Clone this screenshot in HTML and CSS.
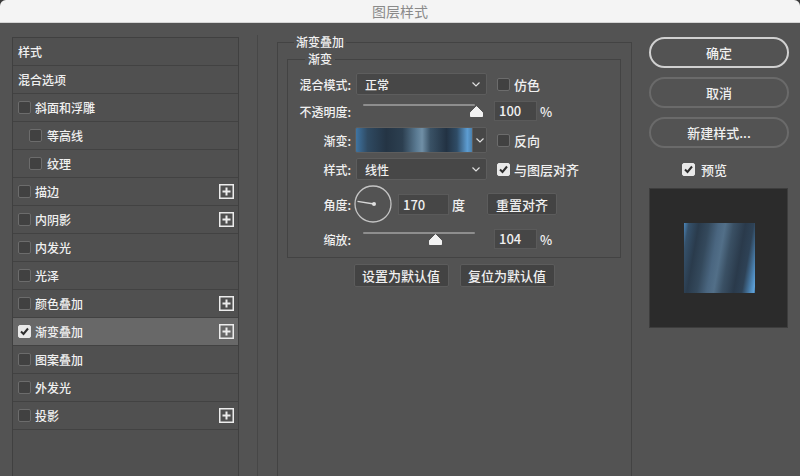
FILE: index.html
```html
<!DOCTYPE html>
<html lang="zh-CN">
<head>
<meta charset="utf-8">
<title>图层样式</title>
<link rel="stylesheet" href="styles.css">
</head>
<body>
<div class="window">
  <header class="titlebar">图层样式</header>
  <div class="main">
    <aside class="style-list">
      <div class="item"><span class="label">样式</span></div>
      <div class="item"><span class="label">混合选项</span></div>
      <div class="item"><span class="cb"></span><span class="label">斜面和浮雕</span></div>
      <div class="item indent"><span class="cb"></span><span class="label">等高线</span></div>
      <div class="item indent"><span class="cb"></span><span class="label">纹理</span></div>
      <div class="item"><span class="cb"></span><span class="label">描边</span>
        <svg class="plus" width="15" height="15" viewBox="0 0 15 15"><rect x="0.75" y="0.75" width="13.5" height="13.5" fill="none" stroke="#ececec" stroke-width="1.5"/><path d="M7.5 3.5V11.5M3.5 7.5H11.5" stroke="#ececec" stroke-width="2"/></svg></div>
      <div class="item"><span class="cb"></span><span class="label">内阴影</span>
        <svg class="plus" width="15" height="15" viewBox="0 0 15 15"><rect x="0.75" y="0.75" width="13.5" height="13.5" fill="none" stroke="#ececec" stroke-width="1.5"/><path d="M7.5 3.5V11.5M3.5 7.5H11.5" stroke="#ececec" stroke-width="2"/></svg></div>
      <div class="item"><span class="cb"></span><span class="label">内发光</span></div>
      <div class="item"><span class="cb"></span><span class="label">光泽</span></div>
      <div class="item"><span class="cb"></span><span class="label">颜色叠加</span>
        <svg class="plus" width="15" height="15" viewBox="0 0 15 15"><rect x="0.75" y="0.75" width="13.5" height="13.5" fill="none" stroke="#ececec" stroke-width="1.5"/><path d="M7.5 3.5V11.5M3.5 7.5H11.5" stroke="#ececec" stroke-width="2"/></svg></div>
      <div class="item selected"><span class="cb on"><svg width="11" height="11" viewBox="0 0 11 11"><path d="M2 5.5L4.5 8L9 2.5" fill="none" stroke="#2e2e2e" stroke-width="2"/></svg></span><span class="label">渐变叠加</span>
        <svg class="plus" width="15" height="15" viewBox="0 0 15 15"><rect x="0.75" y="0.75" width="13.5" height="13.5" fill="none" stroke="#ececec" stroke-width="1.5"/><path d="M7.5 3.5V11.5M3.5 7.5H11.5" stroke="#ececec" stroke-width="2"/></svg></div>
      <div class="item"><span class="cb"></span><span class="label">图案叠加</span></div>
      <div class="item"><span class="cb"></span><span class="label">外发光</span></div>
      <div class="item"><span class="cb"></span><span class="label">投影</span>
        <svg class="plus" width="15" height="15" viewBox="0 0 15 15"><rect x="0.75" y="0.75" width="13.5" height="13.5" fill="none" stroke="#ececec" stroke-width="1.5"/><path d="M7.5 3.5V11.5M3.5 7.5H11.5" stroke="#ececec" stroke-width="2"/></svg></div>
    </aside>

    <section class="content">
      <fieldset class="group">
        <legend>渐变叠加</legend>
        <fieldset class="sub">
          <legend>渐变</legend>
          <div class="rows">
            <div class="row r22">
              <span class="lbl">混合模式:</span>
              <div class="select"><span>正常</span><svg width="8" height="5" viewBox="0 0 8 5"><path d="M0.5 0.5L4 4L7.5 0.5" fill="none" stroke="#e0e0e0" stroke-width="1.2"/></svg></div>
              <div class="check-wrap"><span class="cb"></span><span>仿色</span></div>
            </div>
            <div class="row r22">
              <span class="lbl">不透明度:</span>
              <div class="slider"><span class="track"></span>
                <svg class="thumb" style="left:114px" width="13" height="11" viewBox="0 0 13 11"><path d="M6.5 0.5L12.5 6.5V10.5H0.5V6.5Z" fill="#f2f2f2" stroke="#f2f2f2" stroke-linejoin="round"/></svg></div>
              <span class="num">100</span><span class="unit">%</span>
            </div>
            <div class="row r26">
              <span class="lbl">渐变:</span>
              <div class="grad-pick"><span class="swatch"></span><span class="drop"><svg width="8" height="5" viewBox="0 0 8 5"><path d="M0.5 0.5L4 4L7.5 0.5" fill="none" stroke="#e0e0e0" stroke-width="1.2"/></svg></span></div>
              <div class="check-wrap"><span class="cb"></span><span>反向</span></div>
            </div>
            <div class="row r22">
              <span class="lbl">样式:</span>
              <div class="select"><span>线性</span><svg width="8" height="5" viewBox="0 0 8 5"><path d="M0.5 0.5L4 4L7.5 0.5" fill="none" stroke="#e0e0e0" stroke-width="1.2"/></svg></div>
              <div class="check-wrap"><span class="cb on"><svg width="11" height="11" viewBox="0 0 11 11"><path d="M2 5.5L4.5 8L9 2.5" fill="none" stroke="#2e2e2e" stroke-width="2"/></svg></span><span>与图层对齐</span></div>
            </div>
            <div class="row r38">
              <span class="lbl">角度:</span>
              <svg class="dial" width="38" height="38" viewBox="0 0 38 38"><circle cx="19" cy="19" r="18" fill="none" stroke="#c4c4c4" stroke-width="1.3"/><path d="M20 19L3.5 16.4" stroke="#d8d8d8" stroke-width="1.4"/><circle cx="20" cy="19" r="2" fill="#e0e0e0"/></svg>
              <span class="num wide">170</span><span class="unit deg">度</span>
              <div class="btn reset">重置对齐</div>
            </div>
            <div class="row r22">
              <span class="lbl">缩放:</span>
              <div class="slider"><span class="track"></span>
                <svg class="thumb" style="left:73px" width="13" height="11" viewBox="0 0 13 11"><path d="M6.5 0.5L12.5 6.5V10.5H0.5V6.5Z" fill="#f2f2f2" stroke="#f2f2f2" stroke-linejoin="round"/></svg></div>
              <span class="num">104</span><span class="unit">%</span>
            </div>
          </div>
        </fieldset>
        <div class="defaults">
          <div class="btn">设置为默认值</div>
          <div class="btn">复位为默认值</div>
        </div>
      </fieldset>
    </section>

    <aside class="actions">
      <div class="pill primary">确定</div>
      <div class="pill">取消</div>
      <div class="pill">新建样式...</div>
      <div class="preview-toggle"><span class="cb on"><svg width="11" height="11" viewBox="0 0 11 11"><path d="M2 5.5L4.5 8L9 2.5" fill="none" stroke="#2e2e2e" stroke-width="2"/></svg></span><span>预览</span></div>
      <div class="preview"><div class="preview-square"></div></div>
    </aside>
  </div>
</div>
</body>
</html>
```
FILE: styles.css
```css
* { box-sizing: border-box; }
html, body { margin: 0; padding: 0; }
html { background: #3a3a3a; }
body {
  width: 800px;
  height: 476px;
  overflow: hidden;
  font-family: "Noto Sans CJK SC", "Noto Sans", sans-serif;
  font-size: 12px;
  font-weight: 500;
  color: #f0f0f0;
}
.window {
  width: 800px;
  height: 476px;
  background: #535353;
  border-radius: 6px 6px 0 0;
  overflow: hidden;
}
.titlebar {
  height: 23px;
  background: #f4f4f4;
  border-bottom: 1px solid #d4d4d4;
  color: #8a8a8a;
  font-size: 14px;
  font-weight: 400;
  line-height: 22px;
  text-align: center;
}
.main {
  display: flex;
  height: 453px;
  overflow: hidden;
}

/* left list */
.style-list {
  flex: none;
  width: 227px;
  margin: 14px 0 0 12px;
  height: 460px;
  border: 1px solid #404040;
  border-bottom: none;
  background: #505050;
}
.item {
  display: flex;
  align-items: center;
  gap: 4px;
  height: 28px;
  padding: 0 4px 0 5px;
  border-bottom: 1px solid #424242;
  line-height: 1;
}
.item.indent { padding-left: 16px; gap: 5px; }
.item.selected { background: #686868; }
.item .label { flex: 1; }
.plus { flex: none; }

.cb {
  flex: none;
  width: 13px;
  height: 13px;
  border: 1px solid #6c6c6c;
  background: #414141;
  border-radius: 2px;
  display: flex;
  align-items: center;
  justify-content: center;
}
.cb.on { background: #e9e9e9; border-color: #e9e9e9; }

/* middle */
.content {
  flex: none;
  width: 392px;
  margin: 12px 0 0 18px;
  border-left: 1px solid #474747;
  padding-left: 19px;
}
.group {
  margin: 0;
  width: 355px;
  height: 470px;
  border: 1px solid #434343;
  padding: 3px 10px 0 9px;
}
.group > legend {
  margin-left: 7px;
  padding: 0 2px;
  line-height: 14px;
  font-size: 12px;
}
.sub {
  margin: 0;
  border: 1px solid #434343;
  padding: 7px 0 7px 0;
}
.sub > legend {
  margin-left: 17px;
  padding: 0 3px;
  line-height: 14px;
}
.rows {
  display: flex;
  flex-direction: column;
  gap: 5px;
}
.row {
  display: flex;
  align-items: center;
}
.r22 { height: 22px; }
.r26 { height: 26px; }
.r38 { height: 38px; }
.lbl {
  flex: none;
  width: 63px;
  margin-right: 5px;
  text-align: right;
  white-space: nowrap;
}
.select {
  flex: none;
  width: 131px;
  height: 22px;
  background: #474747;
  border: 1px solid #5d5d5d;
  border-radius: 2px;
  display: flex;
  align-items: center;
  justify-content: space-between;
  padding: 0 6px 0 8px;
}
.check-wrap {
  display: flex;
  align-items: center;
  gap: 4px;
  margin-left: 10px;
  font-size: 13px;
}
.slider {
  flex: none;
  position: relative;
  width: 131px;
  height: 22px;
}
.track {
  position: absolute;
  left: 7px;
  right: 12px;
  top: 4px;
  height: 2px;
  background: #8e8e8e;
  border-radius: 1px;
}
.thumb {
  position: absolute;
  top: 6px;
}
.num {
  flex: none;
  margin-left: 7px;
  width: 43px;
  height: 20px;
  background: #464646;
  border: 1px solid #5a5a5a;
  padding-left: 4px;
  line-height: 18px;
  font-size: 13px;
}
.num.wide { width: 51px; height: 21px; line-height: 19px; margin-left: 6px; }
.unit { margin-left: 3px; font-size: 13px; }
.unit.deg { margin-left: 3px; }
.grad-pick {
  flex: none;
  display: flex;
  width: 132px;
  height: 26px;
  margin-left: -1px;
  border: 1px solid #5d5d5d;
  border-radius: 2px;
  overflow: hidden;
}
.swatch {
  flex: 1;
  background: linear-gradient(90deg, #3f74a2 0%, #2f4a62 10%, #243444 26%, #2c3f50 40%, #5a7a92 52%, #708fa6 57%, #3a5266 64%, #223243 78%, #2f4c66 87%, #5d9dd2 96%, #4a80ad 100%);
}
.drop {
  flex: none;
  width: 14px;
  background: #474747;
  border-left: 1px solid #5d5d5d;
  display: flex;
  align-items: center;
  justify-content: center;
}
.dial { flex: none; margin-left: -2px; }
.btn {
  flex: none;
  height: 23px;
  padding: 0;
  white-space: nowrap;
  background: #434343;
  border: 1px solid #5c5c5c;
  border-radius: 2px;
  display: flex;
  align-items: center;
  justify-content: center;
  font-size: 13px;
}
.btn.reset { width: 70px; height: 22px; margin-left: 22px; }
.defaults {
  display: flex;
  justify-content: center;
  gap: 11px;
  margin-top: 6px;
}
.defaults .btn { width: 95px; }

/* right */
.actions {
  flex: none;
  width: 140px;
  margin-top: 14px;
  display: flex;
  flex-direction: column;
}
.pill {
  height: 31px;
  border: 2px solid #6a6a6a;
  border-radius: 16px;
  display: flex;
  align-items: center;
  justify-content: center;
  font-size: 13px;
  margin-bottom: 9px;
}
.pill.primary { border-color: #d0d0d0; }
.preview-toggle {
  display: flex;
  align-items: center;
  gap: 6px;
  height: 14px;
  margin-top: 5px;
  padding-left: 33px;
  font-size: 13px;
}
.preview {
  margin-top: 12px;
  width: 139px;
  height: 140px;
  background: #2b2b2b;
  border: 1px solid #3d3d3d;
  display: flex;
  align-items: center;
  justify-content: center;
}
.preview-square {
  width: 71px;
  height: 70px;
  margin-left: 2px;
  background: linear-gradient(100deg, #4b86ba 0%, #35516b 6%, #2a3b4c 18%, #34495c 30%, #4a6680 42%, #526f88 50%, #3a5064 60%, #2a3a4b 74%, #2e4256 84%, #4d87b8 94%, #5ea1d8 98%, #3d6f9a 100%);
}
```
